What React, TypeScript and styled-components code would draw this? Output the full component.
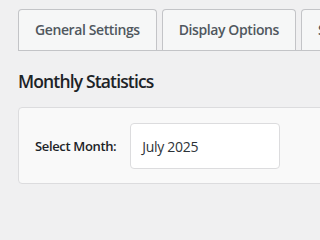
import React from "react";
import styled, { createGlobalStyle } from "styled-components";

const Global = createGlobalStyle`
  html, body { margin: 0; padding: 0; overflow: hidden; }
  body {
    background: #f0f0f1;
    font-family: "Open Sans", "Noto Sans", sans-serif;
    color: #1d2327;
    width: 320px;
    height: 200px;
  }
`;

const Page = styled.div`
  width: 420px;
  padding: 9px 0 0 18px;
  box-sizing: border-box;
`;

const TabBar = styled.nav`
  display: flex;
  flex-wrap: nowrap;
  gap: 5px;
  border-bottom: 1px solid #c3c4c7;
`;

const Tab = styled.a`
  display: block;
  flex: none;
  padding: 0 16px;
  height: 41px;
  line-height: 40px;
  box-sizing: border-box;
  background: #f6f7f7;
  border: 1px solid #c3c4c7;
  border-bottom: none;
  border-radius: 4px 4px 0 0;
  color: #50575e;
  font-size: 14px;
  font-weight: 600;
  letter-spacing: -0.4px;
  white-space: nowrap;
  text-decoration: none;
`;

const Heading = styled.h2`
  margin: 18px 0 14px;
  font-size: 17.5px;
  line-height: 24px;
  font-weight: 600;
  letter-spacing: -0.85px;
  color: #1d2327;
`;

const Card = styled.section`
  display: flex;
  align-items: center;
  gap: 14px;
  padding: 15px 16px 14px;
  background: #f9f9f9;
  border: 1px solid #dcdcde;
  border-radius: 4px;
`;

const Label = styled.label`
  font-size: 13px;
  font-weight: 600;
  letter-spacing: -0.35px;
  color: #1d2327;
  white-space: nowrap;
`;

const Field = styled.div`
  width: 150px;
  height: 46px;
  box-sizing: border-box;
  display: flex;
  align-items: center;
  padding: 0 11px;
  background: #ffffff;
  border: 1px solid #dcdcde;
  border-radius: 4px;
  font-size: 14px;
  letter-spacing: -0.3px;
  color: #2c3338;
`;

export default function App() {
  return (
    <>
      <Global />
      <Page>
        <TabBar>
          <Tab href="#">General Settings</Tab>
          <Tab href="#">Display Options</Tab>
          <Tab href="#">Shortcodes</Tab>
        </TabBar>
        <Heading>Monthly Statistics</Heading>
        <Card>
          <Label>Select Month:</Label>
          <Field>July 2025</Field>
        </Card>
      </Page>
    </>
  );
}
